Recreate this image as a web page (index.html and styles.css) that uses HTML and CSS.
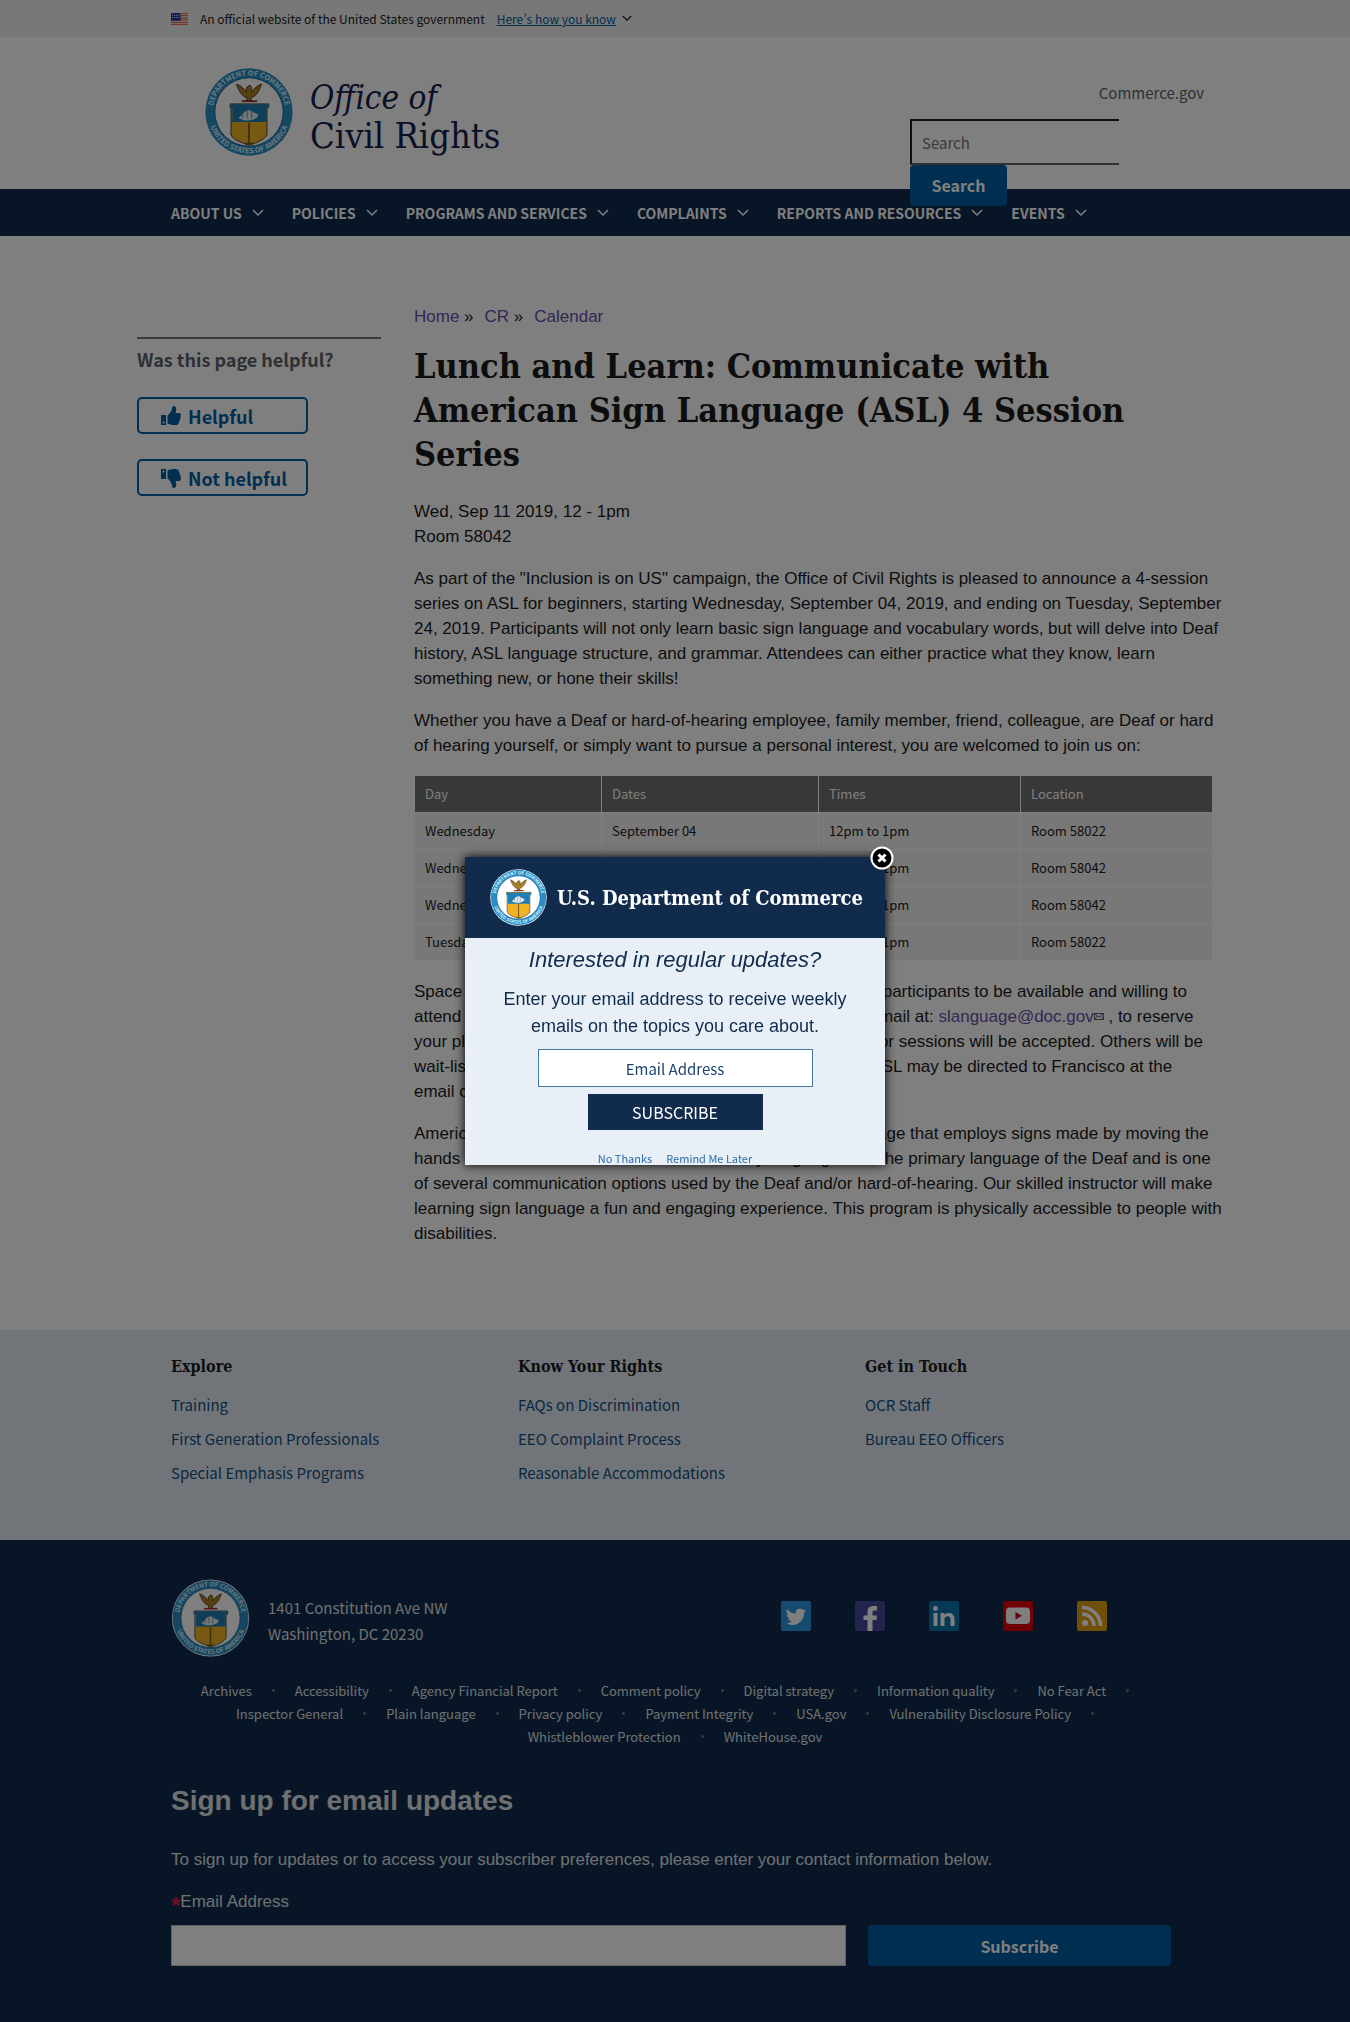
FILE: index.html
```html
<!DOCTYPE html>
<html lang="en">
<head>
<meta charset="utf-8">
<meta name="viewport" content="width=device-width, initial-scale=1">
<title>Lunch and Learn | Office of Civil Rights</title>
<link rel="stylesheet" href="styles.css">
</head>
<body>
<svg class="defs" aria-hidden="true">
  <symbol id="seal" viewBox="0 0 100 100">
    <circle cx="50" cy="50" r="49.500" fill="#fff"/>
    <circle cx="50" cy="50" r="48.500" fill="#2a8ec4"/>
    <circle cx="50" cy="50" r="38" fill="#fff" stroke="#155f93" stroke-width="1"/>
    <path id="arc-top" d="M9.500 50a40.500 40.500 0 0 1 81 0" fill="none"/>
    <path id="arc-bottom" d="M4 50a46 46 0 0 0 92 0" fill="none"/>
    <text class="seal-text"><textPath href="#arc-top" startOffset="50%">DEPARTMENT OF COMMERCE</textPath></text>
    <text class="seal-text"><textPath href="#arc-bottom" startOffset="50%">UNITED STATES OF AMERICA</textPath></text>
    <path d="M48 34c-6-1-9-7-12-15 6 2 9 6 11 9l0-5 4-3 2 3 0 5c2-3 5-7 11-9-3 8-6 14-12 15l1 4h-6z" fill="#a98120" stroke="#4a3812" stroke-width="1"/>
    <path d="M42 38h17" stroke="#9a2c25" stroke-width="2"/>
    <path d="M29 41h43v4h-2v30c-2 6-12 9-20 12-8-3-18-6-20-12V45h-1z" fill="#f0b323" stroke="#333" stroke-width="1"/>
    <path d="M29.500 41.500h42v4h-2V61H31.500V45.500h-2z" fill="#1f7db5"/>
    <path d="M38 56c5-1 5-7 11-8 5 0 5 3 12 5l-3 4c-7 3-13 3-17 1z" fill="#e3edf2"/>
    <path d="M43 50v7M48 46v11M53 47v10" stroke="#6f8692" stroke-width="1"/>
    <path d="M50 62v23M46 85h8" stroke="#805d13" stroke-width="2"/>
  </symbol>
  <symbol id="chevron" viewBox="0 0 12 8">
    <path d="M1 1l5 5 5-5" fill="none" stroke="currentColor" stroke-width="1.500"/>
  </symbol>
  <symbol id="thumb" viewBox="0 0 20 20">
    <path d="M0 9h5v10H0zM6.500 9.500c2-1.500 4-4 4.500-7 .3-2 1-2.500 2-2.500 3 1 2.500 4 1.500 7H18c2 0 2.500 2 1.300 3.300.7 1 .5 2.400-.6 3 .4 1 .1 2-.9 2.700.2 1.600-.8 3-3.300 3-3.500 0-5-.5-8-1.500z" fill="currentColor"/>
    <circle cx="2.500" cy="16.500" r="1" fill="#fff"/>
  </symbol>
</svg>

<div class="banner">
  <div class="wrap banner-row">
    <svg class="flag" viewBox="0 0 16 11" aria-hidden="true">
      <path fill="#fff" d="M0 0h16v11H0z"/>
      <path fill="#db3e1f" d="M0 0h16v1H0zM0 2h16v1H0zM0 4h16v1H0zM0 6h16v1H0zM0 8h16v1H0zM0 10h16v1H0z"/>
      <path fill="#1e33b1" d="M0 0h9v7H0z"/>
      <path stroke="#fff" stroke-dasharray="1 1" d="M1 2h7M1 4h7"/>
    </svg>
    <span>An official website of the United States government</span>
    <button class="banner-toggle" type="button"><span>Here’s how you know</span><svg class="chevron-small"><use href="#chevron"/></svg></button>
  </div>
</div>

<header class="header">
  <div class="wrap header-row">
    <a class="brand" href="#">
      <svg class="brand-seal" role="img" aria-label="Department of Commerce seal"><use href="#seal"/></svg>
      <span class="brand-name"><em>Office of</em><span>Civil Rights</span></span>
    </a>
    <div class="header-tools">
      <a class="commerce-link" href="#">Commerce.gov</a>
      <form class="search">
        <input class="search-input" type="search" placeholder="Search" aria-label="Search">
        <button class="search-button" type="submit">Search</button>
      </form>
    </div>
  </div>
</header>

<nav class="nav" aria-label="Primary">
  <div class="wrap nav-row">
    <button type="button">About Us<svg><use href="#chevron"/></svg></button>
    <button type="button">Policies<svg><use href="#chevron"/></svg></button>
    <button type="button">Programs and Services<svg><use href="#chevron"/></svg></button>
    <button type="button">Complaints<svg><use href="#chevron"/></svg></button>
    <button type="button">Reports and Resources<svg><use href="#chevron"/></svg></button>
    <button type="button">Events<svg><use href="#chevron"/></svg></button>
  </div>
</nav>

<div class="page">
  <aside class="helpful">
    <h2>Was this page helpful?</h2>
    <button type="button"><svg><use href="#thumb"/></svg>Helpful</button>
    <button type="button"><svg class="down"><use href="#thumb"/></svg>Not helpful</button>
  </aside>
  <main class="content">
    <nav class="crumbs" aria-label="Breadcrumb"><span><a href="#">Home</a> »</span><span><a href="#">CR</a> »</span><a href="#">Calendar</a></nav>
    <h1>Lunch and Learn: Communicate with American Sign Language (ASL) 4 Session Series</h1>
    <p>Wed, Sep 11 2019, 12 - 1pm<br>Room 58042</p>
    <p>As part of the "Inclusion is on US" campaign, the Office of Civil Rights is pleased to announce a 4-session series on ASL for beginners, starting Wednesday, September 04, 2019, and ending on Tuesday, September 24, 2019. Participants will not only learn basic sign language and vocabulary words, but will delve into Deaf history, ASL language structure, and grammar. Attendees can either practice what they know, learn something new, or hone their skills!</p>
    <p>Whether you have a Deaf or hard-of-hearing employee, family member, friend, colleague, are Deaf or hard of hearing yourself, or simply want to pursue a personal interest, you are welcomed to join us on:</p>
    <table class="schedule">
      <thead><tr><th scope="col">Day</th><th scope="col">Dates</th><th scope="col">Times</th><th scope="col">Location</th></tr></thead>
      <tbody>
        <tr><td>Wednesday</td><td>September 04</td><td>12pm to 1pm</td><td>Room 58022</td></tr>
        <tr><td>Wednesday</td><td>September 11</td><td>12pm to 1pm</td><td>Room 58042</td></tr>
        <tr><td>Wednesday</td><td>September 18</td><td>12pm to 1pm</td><td>Room 58042</td></tr>
        <tr><td>Tuesday</td><td>September 24</td><td>12pm to 1pm</td><td>Room 58022</td></tr>
      </tbody>
    </table>
    <p>Space is limited and each session builds, so we are asking all participants to be available and willing to attend each of the four sessions. Please reach Francisco by email at: <a href="#">slanguage@doc.gov<svg class="mail" viewBox="0 0 10 7" aria-hidden="true"><path d="M.5.5h9v6h-9zl4.500 3.500L9.500.5M.5 6.500l3-3.500M9.500 6.500l-3-3.500" fill="none" stroke="currentColor"/></svg></a> , to reserve your place. Only the first twenty new employees who sign up for sessions will be accepted. Others will be <span class="nowrap">wait-listed.</span> Any further questions about these sessions or on ASL may be directed to Francisco at the <span class="nowrap">email contact above.</span></p>
    <p>American Sign Language (ASL) is a complete, complex language that employs signs made by moving the hands combined with the facial and other body language. It is the primary language of the Deaf and is one of several communication options used by the Deaf and/or hard-of-hearing. Our skilled instructor will make learning sign language a fun and engaging experience. This program is physically accessible to people with disabilities.</p>
  </main>
</div>

<footer>
  <div class="footer-links">
    <div class="wrap footer-cols">
      <section><h3>Explore</h3><a href="#">Training</a><a href="#">First Generation Professionals</a><a href="#">Special Emphasis Programs</a></section>
      <section><h3>Know Your Rights</h3><a href="#">FAQs on Discrimination</a><a href="#">EEO Complaint Process</a><a href="#">Reasonable Accommodations</a></section>
      <section><h3>Get in Touch</h3><a href="#">OCR Staff</a><a href="#">Bureau EEO Officers</a></section>
    </div>
  </div>
  <div class="footer-dark">
    <div class="wrap">
      <div class="contact">
        <svg class="contact-seal" role="img" aria-label="Department of Commerce seal"><use href="#seal"/></svg>
        <address>1401 Constitution Ave NW<br>Washington, DC 20230</address>
        <div class="social">
          <a href="#" aria-label="Twitter"><svg viewBox="0 0 30 30"><rect width="30" height="30" rx="2" fill="#2a96e0"/><path d="M25 9.500c-.8.400-1.600.6-2.400.7.900-.5 1.500-1.300 1.800-2.300-.8.500-1.700.8-2.600 1a4.100 4.100 0 0 0-7 3.800A11.700 11.700 0 0 1 6.300 8.300a4.100 4.100 0 0 0 1.300 5.500c-.7 0-1.300-.2-1.900-.5 0 2 1.400 3.700 3.300 4.100-.6.200-1.200.2-1.900.1.500 1.600 2 2.800 3.900 2.900A8.300 8.300 0 0 1 5 22.100a11.700 11.700 0 0 0 18-10.400c.8-.6 1.500-1.300 2-2.200z" fill="#fff"/></svg></a>
          <a href="#" aria-label="Facebook"><svg viewBox="0 0 30 30"><rect width="30" height="30" rx="2" fill="#45499a"/><path d="M12.500 30V19H8.500v-4.500h4V11c0-4 2-6 6-6h3.500v4.500h-2.500c-1.800 0-2 .7-2 2v3H22L21.500 19h-4v11z" fill="#fff"/></svg></a>
          <a href="#" aria-label="LinkedIn"><svg viewBox="0 0 30 30"><rect width="30" height="30" rx="2" fill="#0a73ab"/><path d="M4.500 12h4v13h-4zM11.500 12h4v2c2-3.500 10-3 10 4v7h-4v-6.500c0-4.500-6-4-6 0V25h-4z" fill="#fff"/><circle cx="6.500" cy="7.500" r="2.400" fill="#fff"/></svg></a>
          <a href="#" aria-label="YouTube"><svg viewBox="0 0 30 30"><rect width="30" height="30" rx="2" fill="#e00008"/><rect x="3" y="6.500" width="24" height="16.500" rx="4" fill="#fff"/><path d="M12.500 11v7.500l6.500-3.800z" fill="#c80010"/></svg></a>
          <a href="#" aria-label="RSS"><svg viewBox="0 0 30 30"><rect width="30" height="30" rx="2" fill="#e0a010"/><circle cx="8" cy="22" r="3" fill="#fff"/><path d="M5 13a12 12 0 0 1 12 12M5 6.500A18.500 18.500 0 0 1 23.500 25" fill="none" stroke="#fff" stroke-width="3.500"/></svg></a>
        </div>
      </div>
      <ul class="policies">
        <li><a href="#">Archives</a></li>
        <li><a href="#">Accessibility</a></li>
        <li><a href="#">Agency Financial Report</a></li>
        <li><a href="#">Comment policy</a></li>
        <li><a href="#">Digital strategy</a></li>
        <li><a href="#">Information quality</a></li>
        <li><a href="#">No Fear Act</a></li>
        <li><a href="#">Inspector General</a></li>
        <li><a href="#">Plain language</a></li>
        <li><a href="#">Privacy policy</a></li>
        <li><a href="#">Payment Integrity</a></li>
        <li><a href="#">USA.gov</a></li>
        <li><a href="#">Vulnerability Disclosure Policy</a></li>
        <li><a href="#">Whistleblower Protection</a></li>
        <li><a href="#">WhiteHouse.gov</a></li>
      </ul>
      <form class="signup">
        <h2>Sign up for email updates</h2>
        <p>To sign up for updates or to access your subscriber preferences, please enter your contact information below.</p>
        <label for="signup-email"><span class="required">*</span>Email Address</label>
        <div class="signup-row">
          <input id="signup-email" type="email">
          <button type="submit">Subscribe</button>
        </div>
      </form>
    </div>
  </div>
</footer>

<div class="overlay">
  <div class="modal" role="dialog" aria-labelledby="modal-title">
    <button class="modal-close" type="button" aria-label="Close"><svg viewBox="0 0 24 24"><circle cx="12" cy="12" r="10.500" fill="#000" stroke="#fff" stroke-width="2"/><path d="M8.500 8.500l7 7M15.500 8.500l-7 7" stroke="#fff" stroke-width="3"/></svg></button>
    <div class="modal-body">
      <div class="modal-head">
        <svg class="modal-seal" role="img" aria-label="Department of Commerce seal"><use href="#seal"/></svg>
        <span>U.S. Department of Commerce</span>
      </div>
      <h2 id="modal-title">Interested in regular updates?</h2>
      <form class="modal-form">
        <label for="modal-email">Enter your email address to receive weekly emails on the topics you care about.</label>
        <input id="modal-email" type="email" placeholder="Email Address">
        <button type="submit">SUBSCRIBE</button>
      </form>
      <div class="modal-links"><a href="#">No Thanks</a><a href="#">Remind Me Later</a></div>
    </div>
  </div>
</div>
</body>
</html>
```
FILE: styles.css
```css
:root {
  --sans: "Noto Sans CJK SC", "Noto Sans", sans-serif;
  --serif: "DejaVu Serif Condensed", "DejaVu Serif", serif;
  --body: "Liberation Sans", Arial, sans-serif;
  --navy: #112b4c;
  --blue: #005ea2;
  --purple: #6650a8;
}

* { box-sizing: border-box; }

body {
  margin: 0;
  background: #fff;
  color: #1b1b1b;
  font: 17px/25px var(--body);
}

a { color: inherit; text-decoration: none; }
button, input { margin: 0; font: inherit; color: inherit; }
button { border: 0; background: none; padding: 0; cursor: pointer; white-space: nowrap; }
h1, h2, h3, p { margin: 0; }
.nowrap { white-space: nowrap; }
.defs { position: absolute; width: 0; height: 0; }
.seal-text {
  font: 700 8px var(--sans);
  fill: #d8f0fb;
  text-anchor: middle;
}

.wrap {
  max-width: 1040px;
  margin: 0 auto;
  padding: 0 16px;
}

/* Government banner */
.banner { background: #f0f0f0; font: 12px/37px var(--sans); }
.banner-row { display: flex; align-items: center; gap: 12px; }
.flag { width: 17px; height: 12px; }
.banner-toggle {
  display: flex;
  align-items: center;
  gap: 6px;
  color: var(--blue);
  font-feature-settings: "palt", "pwid";
}
.banner-toggle span { text-decoration: underline; }
.chevron-small { width: 10px; height: 7px; color: #1b1b1b; }

/* Header */
.header { height: 152px; }
.header-row { display: flex; justify-content: space-between; padding-top: 30px; }
.brand {
  display: flex;
  gap: 16px;
  margin-left: 33px;
  color: #14204c;
}
.brand-seal { width: 90px; height: 90px; }
.brand-name {
  display: flex;
  flex-direction: column;
  padding-top: 12px;
  font: 36px/38px var(--serif);
}
.brand-name em { font-size: 33px; }
.header-tools {
  display: flex;
  flex-direction: column;
  width: 269px;
  padding-top: 14px;
}
.commerce-link {
  align-self: flex-end;
  margin-right: -25px;
  color: #5b616b;
  font: 15px/24px var(--sans);
}
.search { display: flex; flex-direction: column; align-items: flex-start; padding-top: 14px; }
.search-input {
  width: 209px;
  height: 46px;
  padding: 0 10px;
  border: 2px solid #1b1b1b;
  border-right: 0;
  border-bottom-color: #5b616b;
  background: #fff;
  outline: 0;
  font: 15px/24px var(--sans);
}
.search-input::placeholder { color: #757575; opacity: 1; }
.search-button {
  position: relative;
  width: 97px;
  height: 41px;
  border-radius: 4px;
  background: var(--blue);
  color: #fff;
  font: 700 16px/41px var(--sans);
}

/* Main navigation */
.nav { background: var(--navy); color: #fff; }
.nav-row { display: flex; gap: 28px; height: 47px; align-items: center; }
.nav button {
  display: flex;
  align-items: center;
  gap: 10px;
  font: 700 14px/24px var(--sans);
  text-transform: uppercase;
}
.nav svg { width: 12px; height: 8px; }

/* Page */
.page {
  display: grid;
  grid-template-columns: 244px 1fr;
  gap: 33px;
  max-width: 1140px;
  margin: 0 auto;
  padding: 68px 32px 67px;
}
.helpful { display: flex; flex-direction: column; align-items: flex-start; gap: 25px; padding-top: 33px; }
.helpful h2 {
  align-self: stretch;
  padding-top: 7px;
  border-top: 2px solid #71767a;
  color: #5b616b;
  font: 700 18px/26px var(--sans);
}
.helpful button {
  display: flex;
  align-items: center;
  gap: 7px;
  width: 171px;
  height: 37px;
  padding: 0 22px;
  border: 2px solid var(--blue);
  border-radius: 5px;
  color: var(--blue);
  font: 700 18px/28px var(--sans);
}
.helpful svg { flex: none; width: 20px; height: 20px; }
.helpful .down { transform: scaleY(-1); }

.content a { color: var(--purple); }
.crumbs { display: flex; gap: 11px; }
h1 { margin: 15px 0 23px; font: 700 34px/44px var(--serif); }
.content p { margin: 0 -12px 17px 0; }
.schedule {
  width: 100%;
  margin-bottom: 18px;
  border-collapse: collapse;
  font: 13px/20px var(--sans);
}
.schedule th, .schedule td { height: 37px; padding: 0 10px; border: 1px solid #fff; text-align: left; }
.schedule th { background: #707070; color: #fff; font-weight: 400; }
.schedule td { background: #f0f0f0; }
.schedule th:nth-child(1) { width: 187px; }
.schedule th:nth-child(2) { width: 217px; }
.schedule th:nth-child(3) { width: 202px; }
.mail { width: 10px; height: 7px; margin-bottom: 2px; color: #5b616b; }

/* Footer */
.footer-links { padding: 24px 0 50px; background: #e2ebf5; }
.footer-cols { display: grid; grid-template-columns: repeat(3, 347px); }
.footer-cols section { display: flex; flex-direction: column; }
.footer-cols h3 { padding-bottom: 8px; font: 700 16px/26px var(--serif); }
.footer-cols a { color: #145081; font: 15px/34px var(--sans); }
.footer-dark { padding: 39px 0 56px; background: var(--navy); color: #dfe1e2; }
.contact { display: flex; align-items: center; }
.contact-seal { width: 79px; height: 78px; }
.contact address { flex: 1; padding: 6px 0 0 18px; font: normal 15px/26px var(--sans); }
.social { display: flex; gap: 44px; padding: 0 72px 5px 0; }
.social svg { display: block; width: 30px; height: 30px; }
.policies {
  display: flex;
  flex-wrap: wrap;
  justify-content: center;
  margin: 22px 0 0;
  padding: 0;
  list-style: none;
  font: 13px/23px var(--sans);
}
.policies li { display: flex; align-items: center; }
.policies li:not(:last-child)::after {
  width: 3px;
  height: 3px;
  margin: 0 20px;
  border-radius: 2px;
  background: #71767a;
  content: "";
}
.signup { padding-top: 33px; }
.signup h2 { font: 700 28px/40px var(--body); }
.signup p { padding: 26px 0 17px; }
.signup label { display: flex; align-items: center; height: 25px; margin-bottom: 11px; }
.required { height: 16px; color: #e31c3d; font-size: 24px; font-weight: 700; line-height: 24px; }
.signup-row { display: flex; gap: 22px; align-items: center; }
.signup-row input { flex: 0 0 675px; height: 41px; border: 1px solid #c0c4c8; background: #fff; }
.signup-row button {
  flex: 0 0 303px;
  height: 41px;
  border-radius: 4px;
  background: #005ea2;
  color: #fff;
  font: 700 16px/40px var(--sans);
}

/* Subscription dialog */
.overlay {
  position: fixed;
  inset: 0;
  display: flex;
  align-items: center;
  justify-content: center;
  background: rgba(0, 0, 0, 0.5);
}
.modal { position: relative; width: 420px; }
.modal-body {
  height: 308px;
  overflow: hidden;
  background: #e8eff7;
  color: var(--navy);
  text-align: center;
  box-shadow: 0 0 10px #000;
}
.modal-close { position: absolute; top: -11px; right: -9px; }
.modal-close svg { display: block; width: 24px; height: 24px; }
.modal-head {
  display: flex;
  align-items: center;
  gap: 10px;
  height: 81px;
  padding-left: 25px;
  background: var(--navy);
  color: #fff;
  font: 700 20px/28px var(--serif);
  white-space: nowrap;
}
.modal-seal { width: 57px; height: 57px; }
.modal h2 { padding: 7px 0 11px; font: italic 22px/30px var(--body); }
.modal-form { display: flex; flex-direction: column; align-items: center; }
.modal-form label { width: 360px; padding-bottom: 9px; font-size: 18px; line-height: 27px; }
.modal-form input {
  width: 275px;
  height: 38px;
  border: 1px solid #4377a8;
  background: #fff;
  text-align: center;
  font: 15px/24px var(--sans);
}
.modal-form input::placeholder { color: #1c4470; opacity: 1; }
.modal-form button {
  width: 175px;
  height: 36px;
  margin-top: 7px;
  background: var(--navy);
  color: #fff;
  font: 16px/36px var(--sans);
}
.modal-links { display: flex; justify-content: center; gap: 14px; padding-top: 18px; color: #2f6ca8; font: 11px/20px var(--sans); }
```
